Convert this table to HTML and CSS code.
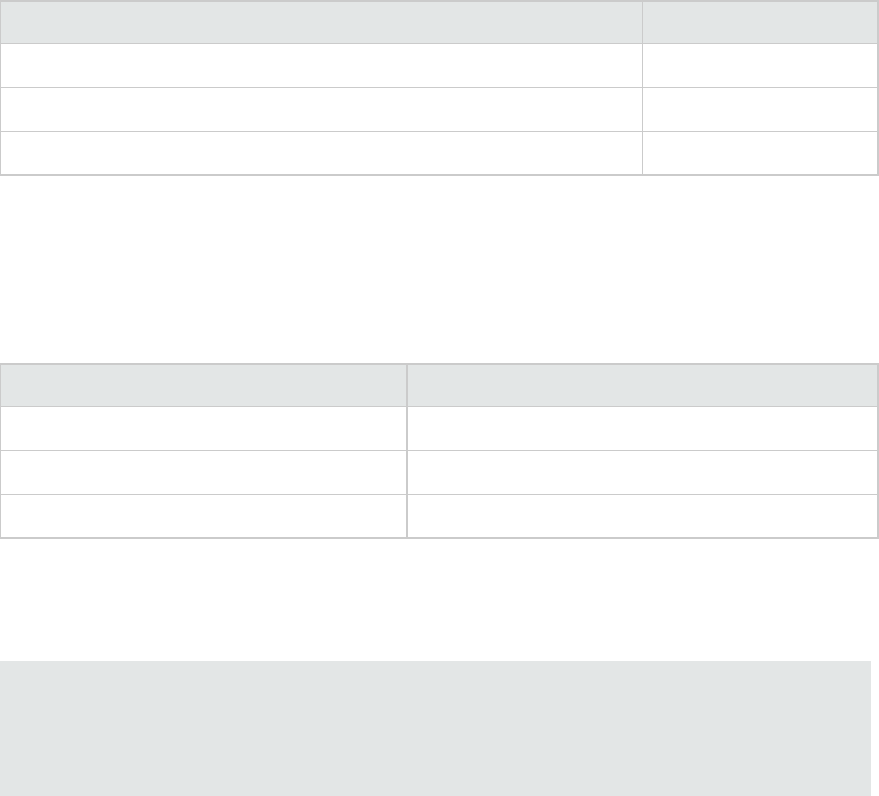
FILE: index.html
```html
<!DOCTYPE html>
<html lang="en">
<head>
  <meta charset="UTF-8" />
  <meta name="viewport" content="width=device-width, initial-scale=1.0"/>
  <title>Tables</title>
  <link rel="stylesheet" href="styles.css">
</head>
<body>
  <table class="grid grid-first">
    <thead>
      <tr><th class="col-wide"></th><th></th></tr>
    </thead>
    <tbody>
      <tr class="row"><td></td><td></td></tr>
      <tr class="row"><td></td><td></td></tr>
      <tr class="row last"><td></td><td></td></tr>
    </tbody>
  </table>

  <table class="grid grid-second">
    <thead>
      <tr><th class="col-half"></th><th></th></tr>
    </thead>
    <tbody>
      <tr class="row"><td></td><td></td></tr>
      <tr class="row"><td></td><td></td></tr>
      <tr class="row last"><td></td><td></td></tr>
    </tbody>
  </table>

  <div class="note"></div>
</body>
</html>
```

FILE: styles.css
```css
body {
  margin: 0;
  font-family: "Liberation Sans", Arial, sans-serif;
  background-color: #fff;
  color: #333;
}
.grid {
  width: 879px;
  border-collapse: separate;
  border-spacing: 0;
  border-style: solid;
  border-color: #cbcbcb;
  border-width: 2px 2px 2px 1px;
  table-layout: fixed;
}
.grid th,
.grid td {
  padding: 0;
  border-bottom: 1px solid #cbcbcb;
}
.grid th {
  height: 41px;
  background-color: #e3e6e6;
}
.grid td {
  height: 43px;
}
.grid .last td {
  height: 42px;
  border-bottom: none;
}
.grid th:first-child,
.grid td:first-child {
  border-right: 1px solid #cbcbcb;
}
.grid-second th:first-child,
.grid-second td:first-child {
  border-right-width: 2px;
}
.col-wide {
  width: 641px;
}
.col-half {
  width: 405px;
}
.grid-second {
  margin-top: 187px;
}
.note {
  margin-top: 122px;
  width: 871px;
  height: 140px;
  background-color: #e3e6e6;
}
```
